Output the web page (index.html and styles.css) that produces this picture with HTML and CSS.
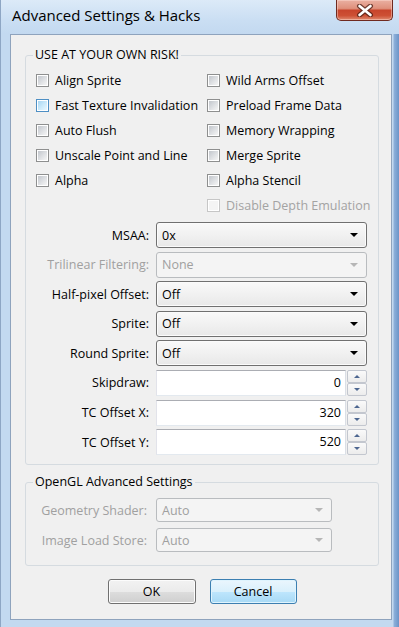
FILE: index.html
```html
<!DOCTYPE html>
<html>
<head>
<meta charset="utf-8">
<title>Advanced Settings &amp; Hacks</title>
<link rel="stylesheet" href="styles.css">
</head>
<body>
<div class="window">
  <div class="titlebar">
    <div class="title">Advanced Settings &amp; Hacks</div>
    <div class="close">
      <svg width="18" height="13" viewBox="0 0 18 13">
        <path d="M3.5 2 L14.5 11 M14.5 2 L3.5 11" stroke="#4a1d14" stroke-width="5" stroke-linecap="round" fill="none" opacity="0.75"/>
        <path d="M3.5 2 L14.5 11 M14.5 2 L3.5 11" stroke="#ffffff" stroke-width="2.6" stroke-linecap="round" fill="none"/>
      </svg>
    </div>
  </div>
  <div class="frame-body">
    <div class="client">
      <fieldset class="group group-risk">
        <legend>USE AT YOUR OWN RISK!</legend>
        <div class="checks">
          <label class="check"><span class="box"></span>Align Sprite</label>
          <label class="check"><span class="box"></span>Wild Arms Offset</label>
          <label class="check"><span class="box hot"></span>Fast Texture Invalidation</label>
          <label class="check"><span class="box"></span>Preload Frame Data</label>
          <label class="check"><span class="box"></span>Auto Flush</label>
          <label class="check"><span class="box"></span>Memory Wrapping</label>
          <label class="check"><span class="box"></span>Unscale Point and Line</label>
          <label class="check"><span class="box"></span>Merge Sprite</label>
          <label class="check"><span class="box"></span>Alpha</label>
          <label class="check"><span class="box"></span>Alpha Stencil</label>
          <span class="empty"></span>
          <label class="check disabled"><span class="box"></span>Disable Depth Emulation</label>
        </div>
        <div class="form">
          <div class="row"><span class="lbl">MSAA:</span><div class="combo"><span>0x</span><i class="arrow"></i></div></div>
          <div class="row"><span class="lbl disabled">Trilinear Filtering:</span><div class="combo disabled"><span>None</span><i class="arrow"></i></div></div>
          <div class="row"><span class="lbl">Half-pixel Offset:</span><div class="combo"><span>Off</span><i class="arrow"></i></div></div>
          <div class="row"><span class="lbl">Sprite:</span><div class="combo"><span>Off</span><i class="arrow"></i></div></div>
          <div class="row"><span class="lbl">Round Sprite:</span><div class="combo"><span>Off</span><i class="arrow"></i></div></div>
          <div class="row"><span class="lbl">Skipdraw:</span><div class="spinbox"><div class="input">0</div><div class="spin"><span class="sbtn"><i class="up"></i></span><span class="sbtn"><i class="down"></i></span></div></div></div>
          <div class="row"><span class="lbl">TC Offset X:</span><div class="spinbox"><div class="input">320</div><div class="spin"><span class="sbtn"><i class="up"></i></span><span class="sbtn"><i class="down"></i></span></div></div></div>
          <div class="row"><span class="lbl">TC Offset Y:</span><div class="spinbox"><div class="input">520</div><div class="spin"><span class="sbtn"><i class="up"></i></span><span class="sbtn"><i class="down"></i></span></div></div></div>
        </div>
      </fieldset>
      <fieldset class="group group-ogl">
        <legend>OpenGL Advanced Settings</legend>
        <div class="form form-ogl">
          <div class="row"><span class="lbl disabled wide">Geometry Shader:</span><div class="combo disabled"><span>Auto</span><i class="arrow"></i></div></div>
          <div class="row"><span class="lbl disabled wide">Image Load Store:</span><div class="combo disabled"><span>Auto</span><i class="arrow"></i></div></div>
        </div>
      </fieldset>
      <div class="buttons">
        <div class="btn">OK</div>
        <div class="btn default">Cancel</div>
      </div>
    </div>
  </div>
</div>
</body>
</html>
```

FILE: styles.css
```css
* { box-sizing: border-box; }
html, body { margin: 0; padding: 0; }
body {
  width: 399px;
  height: 627px;
  overflow: hidden;
  font-family: "Open Sans", "Noto Sans", sans-serif;
  font-size: 12.5px;
  color: #000;
  background: #c3d9f0;
}
.window {
  width: 399px;
  height: 627px;
  display: flex;
  flex-direction: column;
  border-left: 1px solid #8ea6c4;
  background: #c3d9f0;
}
.titlebar {
  height: 34px;
  flex: none;
  display: flex;
  justify-content: space-between;
  align-items: flex-start;
  padding: 0 6px 0 11px;
  background: linear-gradient(180deg, #dceaf8 0%, #cadef3 60%, #c3d9f0 100%);
}
.title {
  font-size: 15px;
  line-height: 18px;
  margin-top: 6px;
  color: #000;
}
.close {
  width: 57px;
  height: 21px;
  border: 1px solid #6f2a20;
  border-top: none;
  border-radius: 0 0 5px 5px;
  background: linear-gradient(180deg, #eab0a2 0%, #df907c 42%, #c8452c 52%, #cd5034 78%, #e08a70 100%);
  box-shadow: inset 0 0 0 1px rgba(255, 225, 215, 0.45);
  display: flex;
  align-items: center;
  justify-content: center;
}
.frame-body {
  flex: 1;
  display: flex;
  padding: 0 7px 7px 9px;
  background: linear-gradient(90deg, #c3d9f0 0px, #c3d9f0 392px, #8db0da 393px, #6b94c7 398px);
}
.client {
  width: 382px;
  height: 586px;
  border: 1px solid #8ea3bd;
  background: #f0f0f0;
  padding: 12px 12px 0 14px;
  display: flex;
  flex-direction: column;
}
.group {
  margin: 0;
  border: 1px solid #d5dbe0;
  border-radius: 3px;
  min-width: 0;
}
.group legend {
  padding: 0 2px;
  margin-left: -3px;
  line-height: 16px;
  font-size: 12.5px;
  color: #000;
}
.group-risk {
  padding: 4.5px 11px 9px 10px;
}
.checks {
  display: grid;
  grid-template-columns: 171px 1fr;
  grid-auto-rows: 25px;
  align-items: center;
}
.check {
  display: flex;
  align-items: center;
  gap: 6px;
  white-space: nowrap;
}
.box {
  width: 13px;
  height: 13px;
  flex: none;
  border: 1px solid #8e8f8f;
  padding: 1px;
  background: #fff;
}
.box::after {
  content: "";
  display: block;
  width: 9px;
  height: 9px;
  background: linear-gradient(135deg, #c2c6cc 0%, #dfe1e4 55%, #f5f5f5 100%);
}
.box.hot { border-color: #4e8fc4; }
.box.hot::after { background: linear-gradient(135deg, #a8d6f3 0%, #cdebfb 55%, #eaf7fe 100%); }
.check.disabled { color: #a3a3a3; }
.check.disabled .box { border-color: #c6c6c6; }
.check.disabled .box::after { background: #f4f4f4; }
.form {
  display: flex;
  flex-direction: column;
  gap: 3.6px;
  margin-top: 4.5px;
}
.row {
  display: grid;
  grid-template-columns: 113px 211px;
  column-gap: 7px;
  height: 26px;
  align-items: center;
}
.lbl {
  text-align: right;
  white-space: nowrap;
}
.lbl.disabled { color: #a0a0a0; }
.lbl.wide { padding-right: 2px; }
.combo {
  height: 26px;
  border: 1px solid #707070;
  border-radius: 3px;
  background: linear-gradient(180deg, #f9f9f9 0%, #f1f1f1 50%, #e8e8e8 100%);
  box-shadow: inset 0 0 0 1px #fbfbfb;
  display: flex;
  align-items: center;
  justify-content: space-between;
  padding: 0 8px 0 5px;
}
.arrow {
  width: 0;
  height: 0;
  border-left: 4px solid transparent;
  border-right: 4px solid transparent;
  border-top: 4px solid #000;
}
.combo.disabled {
  border-color: #b9bcbf;
  background: #f4f4f4;
  box-shadow: none;
  color: #a0a0a0;
}
.combo.disabled .arrow { border-top-color: #b6b6b6; }
.spinbox {
  display: flex;
  gap: 1px;
  height: 26px;
}
.input {
  width: 190px;
  height: 26px;
  background: #fff;
  border: 1px solid;
  border-color: #abadb3 #dbdfe6 #e3e9ef #e2e3ea;
  text-align: right;
  padding-right: 4px;
  line-height: 24px;
}
.spin {
  width: 20px;
  display: flex;
  flex-direction: column;
}
.sbtn {
  flex: 1;
  border: 1px solid #c3c7cf;
  border-radius: 2px;
  background: linear-gradient(180deg, #fafafa 0%, #ececec 100%);
  display: flex;
  align-items: center;
  justify-content: center;
}
.up, .down {
  width: 0;
  height: 0;
  border-left: 3.5px solid transparent;
  border-right: 3.5px solid transparent;
}
.up { border-bottom: 3.5px solid #4d6690; }
.down { border-top: 3.5px solid #4d6690; }
.group-ogl {
  margin-top: 9px;
  padding: 8px 11px 13px 10px;
}
.form-ogl {
  margin-top: 0;
  gap: 6px;
}
.form-ogl .row { grid-template-columns: 113px 176px; height: 24px; }
.form-ogl .combo { height: 24px; }
.buttons {
  display: flex;
  justify-content: center;
  gap: 14px;
  margin-top: 13px;
}
.btn {
  width: 88px;
  height: 25px;
  border: 1px solid #707070;
  border-radius: 3px;
  background: linear-gradient(180deg, #f2f2f2 0%, #ebebeb 50%, #dddddd 51%, #cfcfcf 100%);
  box-shadow: inset 0 0 0 1px #fcfcfc;
  display: flex;
  align-items: center;
  justify-content: center;
  font-size: 12.5px;
}
.btn.default {
  width: 87px;
  border-color: #3c7fb1;
  background: linear-gradient(180deg, #eaf6fd 0%, #d9f0fc 50%, #bee6fd 51%, #a7d9f5 100%);
  box-shadow: inset 0 0 0 1px #dff4fe;
}
```
